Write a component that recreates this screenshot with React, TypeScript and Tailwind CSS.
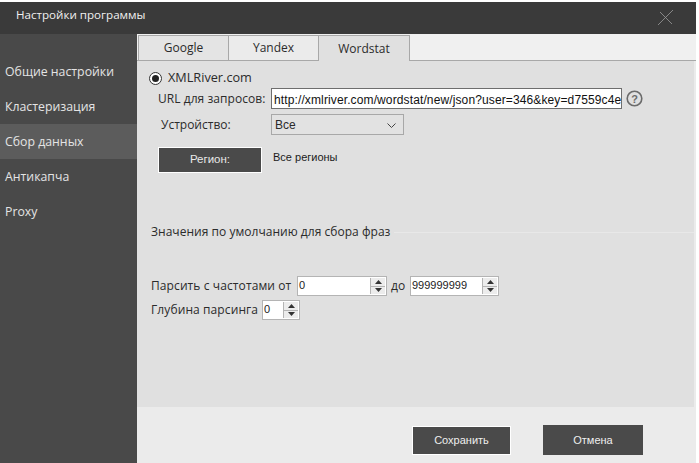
import React from "react";

function Spin({ w, value }: { w: string; value: string }) {
  return (
    <div className={`${w} h-[20px] bg-white border border-[#b4b4b4] flex items-stretch justify-between`}>
      <span className="pl-[1px] font-['Liberation_Sans',sans-serif] text-[11px] leading-[16px] text-[#222]">{value}</span>
      <div className="w-[15px] flex flex-col border-l border-[#b4b4b4] bg-[#ececec] my-[1px] mr-[1px]">
        <div className="flex-1 flex items-center justify-center border-b border-[#b4b4b4]">
          <svg width="7" height="4" viewBox="0 0 7 4"><path d="M3.5 0L7 4H0z" fill="#333" /></svg>
        </div>
        <div className="flex-1 flex items-center justify-center">
          <svg width="7" height="4" viewBox="0 0 7 4"><path d="M0 0H7L3.5 4z" fill="#333" /></svg>
        </div>
      </div>
    </div>
  );
}

export default function App() {
  const items = ["Общие настройки", "Кластеризация", "Сбор данных", "Антикапча", "Proxy"];
  return (
    <div className="w-[699px] h-[463px] bg-white pt-[2px] pr-[3px] overflow-hidden font-['Open_Sans','Noto_Sans',sans-serif] text-[12px] text-[#2b2b2b]">
      <div className="h-[461px] flex flex-col">
        <div className="h-[32px] shrink-0 bg-[#3a3a3a] flex items-center justify-between pl-[16px] pr-[22px]">
          <span className="text-[#f0f0f0] text-[11.6px] leading-[26px] pb-[6px]">Настройки программы</span>
          <svg width="17" height="17" viewBox="0 0 17 17" className="mb-[2px]">
            <path d="M1 16L16 1M3 3L15 15" stroke="#9a9a9a" strokeWidth="0.8" />
          </svg>
        </div>
        <div className="flex-1 flex min-h-0">
          <div className="w-[137px] shrink-0 bg-[#494949] pt-[20px]">
            {items.map((t) => (
              <div
                key={t}
                className={`h-[35px] pl-[5px] pt-[2px] flex items-center text-[12.3px] text-[#e4e4e4] ${t === "Сбор данных" ? "bg-[#5c5c5c]" : ""}`}
              >
                {t}
              </div>
            ))}
          </div>
          <div className="flex-1 bg-[#ebebeb] flex flex-col min-w-0">
            <div className="h-[27px] shrink-0 bg-[#f0f0f0] flex items-end pl-[1px] pr-[2px] border-b border-[#a8a8a8]">
              <div className="w-[91px] h-[25px] bg-[#e4e4e4] border border-b-0 border-[#a8a8a8] flex items-center justify-center text-[12px]">Google</div>
              <div className="w-[90px] h-[25px] bg-[#ebebeb] border-r border-t border-[#a8a8a8] flex items-center justify-center text-[12px]">Yandex</div>
              <div className="w-[91px] h-[26px] -mb-[1px] bg-[#e0e0e0] border-r border-t border-[#a8a8a8] flex items-center justify-center text-[12px]">Wordstat</div>
            </div>
            <div className="h-[346px] shrink-0 bg-[#e0e0e0] mr-[2px] pt-[8px] pl-[12px]">
              <div className="flex items-center h-[18px]">
                <span className="w-[13px] h-[13px] rounded-full border border-[#333] bg-white flex items-center justify-center">
                  <span className="w-[7px] h-[7px] rounded-full bg-[#222]" />
                </span>
                <span className="ml-[6px] text-[12.7px]">XMLRiver.com</span>
              </div>
              <div className="flex items-center h-[21px] mt-[1px] pl-[9px]">
                <span className="w-[113px] shrink-0 text-[12px] whitespace-nowrap tracking-[0.05px]">URL для запросов:</span>
                <div className="w-[351px] h-[21px] shrink-0 bg-white border border-[#6e6e6e] pl-[2px] overflow-hidden whitespace-nowrap font-['Liberation_Sans',sans-serif] text-[12px] tracking-[0.12px] leading-[22px] text-[#111]">
                  http://xmlriver.com/wordstat/new/json?user=346&amp;key=d7559c4e
                </div>
                <svg width="17" height="17" viewBox="0 0 17 17" className="ml-[4px] shrink-0">
                  <circle cx="8.5" cy="8.5" r="7.3" fill="none" stroke="#6b6b6b" strokeWidth="1.6" />
                  <text x="8.5" y="12.5" textAnchor="middle" fontSize="11" fontWeight="700" fill="#6b6b6b" fontFamily="Liberation Sans">?</text>
                </svg>
              </div>
              <div className="flex items-center h-[21px] mt-[5px] pl-[12px]">
                <span className="w-[110px] text-[12px]">Устройство:</span>
                <div className="w-[133px] h-[21px] border border-[#a8a8a8] bg-[#e2e2e2] flex items-center justify-between pl-[3px] pr-[7px] pt-[1px] font-['Liberation_Sans',sans-serif] text-[12px]">
                  <span>Все</span>
                  <svg width="9" height="5" viewBox="0 0 9 5"><path d="M0.5 0.5L4.5 4.5L8.5 0.5" fill="none" stroke="#444" /></svg>
                </div>
              </div>
              <div className="flex mt-[12px] pl-[9px]">
                <div className="w-[104px] h-[26px] bg-[#4a4a4a] border border-white flex items-center justify-center text-[11.5px] text-[#e8e8e8] font-['Liberation_Sans',sans-serif]">
                  Регион:
                </div>
                <span className="ml-[11px] mt-[2px] leading-[16px] text-[11px] font-['Liberation_Sans',sans-serif] text-[#1c1c1c]">Все регионы</span>
              </div>
              <div className="flex items-center mt-[50px] h-[18px] pl-[2px]">
                <span className="text-[12px] whitespace-nowrap tracking-[0.03px]">Значения по умолчанию для сбора фраз</span>
                <div className="flex-1 h-px bg-[#e8e8e8] ml-[4px]" />
              </div>
              <div className="flex items-center mt-[35px] h-[20px] pl-[2px]">
                <span className="w-[146px] whitespace-nowrap text-[12px] tracking-[0.1px]">Парсить с частотами от</span>
                <Spin w="w-[90px]" value="0" />
                <span className="w-[23px] pl-[4px] text-[12px]">до</span>
                <Spin w="w-[89px]" value="999999999" />
              </div>
              <div className="flex items-center mt-[4px] h-[20px] pl-[2px]">
                <span className="w-[111px] whitespace-nowrap text-[12px] tracking-[0.1px]">Глубина парсинга</span>
                <Spin w="w-[38px]" value="0" />
              </div>
            </div>
            <div className="flex-1 flex items-start pl-[275px] pt-[19px]">
              <div className="w-[99px] h-[29px] bg-[#4a4a4a] border border-white flex items-center justify-center text-[#eee] text-[11px] font-['Liberation_Sans',sans-serif]">Сохранить</div>
              <div className="w-[100px] h-[30px] ml-[32px] -mt-[1px] bg-[#4a4a4a] flex items-center justify-center text-[#eee] text-[11px] font-['Liberation_Sans',sans-serif]">Отмена</div>
            </div>
          </div>
        </div>
      </div>
    </div>
  );
}
